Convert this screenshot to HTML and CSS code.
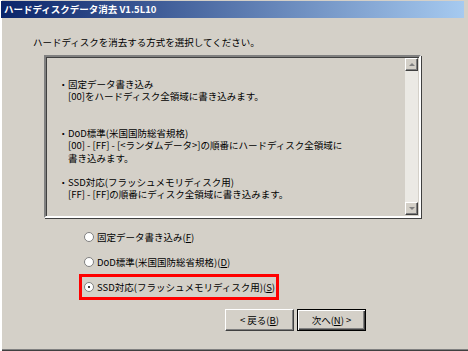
FILE: index.html
```html
<!DOCTYPE html>
<html>
	<head>
		<meta charset="utf-8">
		<link rel="stylesheet" href="styles.css">
	</head>
	<body>
		<div id="window">
			<div id="titleBar">ハードディスクデータ消去 V1.5L10</div>
			<div id="dialog">
				<div id="prompt">ハードディスクを消去する方式を選択してください。</div>
				<div id="descBox">
					<div id="descText">
						<p class="item first"><span class="bullet">・</span>固定データ書き込み<br>[00]をハードディスク全領域に書き込みます。</p>
						<p class="item"><span class="bullet">・</span>DoD標準(米国国防総省規格)<br>[00] - [FF] - [&lt;ランダムデータ&gt;]の順番にハードディスク全領域に<br>書き込みます。</p>
						<p class="item"><span class="bullet">・</span>SSD対応(フラッシュメモリディスク用)<br>[FF] - [FF]の順番にディスク全領域に書き込みます。</p>
					</div>
					<div id="scrollBar">
						<div class="sbButton"><span class="arrowUp"></span></div>
						<div id="sbTrack"></div>
						<div class="sbButton"><span class="arrowDown"></span></div>
					</div>
				</div>
				<div id="options">
					<div class="option"><span class="radio"></span>固定データ書き込み(<u>F</u>)</div>
					<div class="option"><span class="radio"></span>DoD標準(米国国防総省規格)(<u>D</u>)</div>
					<div class="option selected"><span class="radio checked"></span>SSD対応(フラッシュメモリディスク用)(<u>S</u>)</div>
				</div>
				<div id="buttons">
					<div class="btn">&lt; 戻る(<u>B</u>)</div>
					<div class="btn default">次へ(<u>N</u>) &gt;</div>
				</div>
			</div>
		</div>
	</body>
</html>
```

FILE: styles.css
```css
body{
	margin:0;
	background-color:#d4d0c8;
	font-family:"Noto Sans CJK JP", sans-serif;
	font-size:9.5px;
	color:#000;
}

#window{
	width:468px;
	height:351px;
	box-sizing:border-box;
	box-shadow:inset 2px 0 #fff, inset 0 -1px #404040, inset 0 -2px #808080;
	padding-top:1px;
}

#titleBar{
	height:17px;
	line-height:17px;
	margin:0 4px 0 1px;
	padding-left:3px;
	background:linear-gradient(to right, #0a246a, #a6caf0);
	color:#fff;
	font-weight:bold;
	font-size:9.5px;
}

#dialog{
	padding:18px 0 0 33px;
}

#prompt{
	line-height:12px;
	margin-bottom:7px;
}

#descBox{
	display:flex;
	width:377px;
	height:163px;
	margin-left:11px;
	box-sizing:border-box;
	border:2px solid;
	border-color:#808080 #fff #fff #808080;
	box-shadow:inset 1px 1px #404040, 1px 1px #404040;
}

#descText{
	flex:1;
	padding:21px 0 0 22px;
	line-height:12.25px;
}

.item{
	margin:0 0 12.25px 0;
}

.item.first{
	margin-bottom:24.5px;
}

.bullet{
	margin-left:-9.5px;
}

#scrollBar{
	width:13px;
	display:flex;
	flex-direction:column;
	margin:1px 1px 1px 0;
}

.sbButton{
	height:13px;
	box-sizing:border-box;
	border:1px solid;
	border-color:#fff #404040 #404040 #fff;
	box-shadow:inset -1px -1px #808080;
	background-color:#d4d0c8;
	position:relative;
}

.arrowUp, .arrowDown{
	position:absolute;
	left:3px;
	top:4px;
	width:0;
	height:0;
	border-left:3px solid transparent;
	border-right:3px solid transparent;
}

.arrowUp{
	border-bottom:3px solid #808080;
}

.arrowDown{
	border-top:3px solid #808080;
}

#sbTrack{
	flex:1;
	background-color:#ebe9e4;
}

#options{
	margin:6px 0 0 46px;
}

.option{
	display:flex;
	align-items:center;
	height:25px;
	box-sizing:border-box;
	padding-left:5px;
}

.option.selected{
	display:inline-flex;
	border:3px solid #ff0000;
	padding:0 1px 0 2px;
	height:26px;
}

.radio{
	width:10px;
	height:10px;
	border-radius:50%;
	background-color:#fff;
	box-sizing:border-box;
	border:1px solid #808080;
	margin-right:3px;
	position:relative;
}

.radio.checked:after{
	content:"";
	position:absolute;
	left:3px;
	top:3px;
	width:2px;
	height:2px;
	background-color:#000;
	border-radius:50%;
}

#buttons{
	display:flex;
	gap:3px;
	margin:9px 0 0 192px;
}

.btn{
	width:69px;
	height:22px;
	box-sizing:border-box;
	line-height:20px;
	text-align:center;
	border:1px solid;
	border-color:#fff #404040 #404040 #fff;
	box-shadow:inset -1px -1px #808080;
}

.btn.default{
	border:1px solid #000;
	box-shadow:inset 1px 1px #fff, inset -1px -1px #404040, inset -2px -2px #808080;
	line-height:20px;
}
```
